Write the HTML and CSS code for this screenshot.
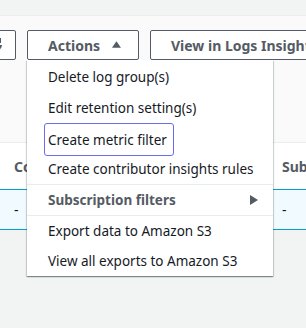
FILE: index.html
```html
<!DOCTYPE html>
<html lang="en">
<head>
<meta charset="utf-8">
<title>Log groups</title>
<link rel="stylesheet" href="styles.css">
</head>
<body>
<div class="topbar"></div>
<section class="panel">
  <div class="toolbar">
    <button class="btn btn-icon" aria-label="Refresh">
      <svg width="16" height="16" viewBox="0 0 16 16" fill="none" stroke="#545b64" stroke-width="2">
        <path d="M13 8a5 5 0 1 1-1.5-3.6"/>
        <path d="M12 1v4H8"/>
      </svg>
    </button>
    <div class="dropdown">
      <button class="btn btn-actions">Actions
        <svg class="caret" width="10" height="7" viewBox="0 0 10 7"><path d="M0 7L5 0L10 7Z" fill="#545b64"/></svg>
      </button>
      <div class="menu">
        <ul class="menu-group">
          <li class="item"><span class="label">Delete log group(s)</span></li>
          <li class="item"><span class="label">Edit retention setting(s)</span></li>
          <li class="item"><span class="label focused">Create metric filter</span></li>
          <li class="item short"><span class="label">Create contributor insights rules</span></li>
        </ul>
        <ul class="menu-group">
          <li class="item short submenu"><span class="label">Subscription filters</span>
            <svg width="8" height="10" viewBox="0 0 8 10"><path d="M0 0L8 5L0 10Z" fill="#545b64"/></svg>
          </li>
        </ul>
        <ul class="menu-group">
          <li class="item short"><span class="label">Export data to Amazon S3</span></li>
          <li class="item short"><span class="label">View all exports to Amazon S3</span></li>
        </ul>
      </div>
    </div>
    <button class="btn">View in Logs Insights</button>
  </div>
  <div class="table">
    <div class="row head">
      <div class="cell">Co</div>
      <div class="cell">Subscription filters</div>
    </div>
    <div class="row selected">
      <div class="cell">-</div>
      <div class="cell">-</div>
    </div>
  </div>
</section>
</body>
</html>
```

FILE: styles.css
```css
html, body {
  margin: 0;
  padding: 0;
  width: 306px;
  height: 328px;
  overflow: hidden;
}
body {
  background: #f2f3f3;
  font-family: "Noto Sans", "Open Sans", sans-serif;
  font-size: 14px;
  color: #16191f;
}
.topbar {
  height: 15px;
  background: #f2f3f3;
  border-bottom: 1px solid #eaeded;
}
.panel {
  background: #fafafa;
}
.toolbar {
  display: flex;
  gap: 11px;
  padding-top: 14px;
  white-space: nowrap;
  height: 30px;
}
.btn {
  box-sizing: border-box;
  height: 30px;
  display: flex;
  align-items: center;
  background: #fff;
  border: 1px solid #545b64;
  border-radius: 2px;
  color: #545b64;
  font-family: inherit;
  font-size: 14px;
  font-weight: 700;
  padding: 0 20px;
  flex: none;
  margin: 0;
}
.btn-icon {
  width: 40px;
  margin-left: -24px;
  justify-content: flex-end;
  padding: 0 11px 0 0;
}
.dropdown {
  position: relative;
}
.btn-actions {
  width: 112px;
  padding: 0 17px 0 20px;
  gap: 12px;
}
.caret {
  margin-top: -1px;
}
.menu {
  position: absolute;
  left: 0;
  top: 30px;
  width: 246px;
  background: #fff;
  z-index: 5;
  padding-top: 1px;
  box-shadow: 0 1px 1px 0 rgba(0, 28, 36, 0.3), 1px 1px 1px 0 rgba(0, 28, 36, 0.15), -1px 1px 1px 0 rgba(0, 28, 36, 0.15);
}
.menu-group {
  list-style: none;
  margin: 0;
  padding: 0;
  border-top: 1px solid #eaeded;
}
.menu-group:first-child {
  border-top: none;
}
.item {
  height: 31px;
  display: flex;
  align-items: center;
  padding-left: 18px;
  padding-right: 15px;
  white-space: nowrap;
  font-size: 13.5px;
}
.item:nth-child(3) {
  padding-top: 2px;
  height: 29px;
}
.item.short {
  height: 30px;
}
.label {
  display: inline-flex;
  align-items: center;
  height: 100%;
  box-sizing: border-box;
  padding: 0 3px;
  font-weight: 400;
}
.focused {
  outline: 1px solid #6b6bf0;
  outline-offset: 0;
  border-radius: 2px;
  height: 31px;
  padding-right: 6px;
}
.submenu {
  justify-content: space-between;
}
.submenu .label {
  font-weight: 700;
  color: #545b64;
}
.table {
  margin-top: 82px;
  background: #fff;
  border-top: 1px solid #eaeded;
}
.row {
  display: grid;
  grid-template-columns: 268px 1fr;
  white-space: nowrap;
  overflow: hidden;
}
.cell {
  padding-left: 14px;
  overflow: hidden;
}
.head {
  height: 46px;
  align-items: center;
  font-weight: 700;
  color: #545b64;
}
.selected {
  height: 39px;
  align-items: center;
  background: #f1faff;
  border-top: 1px solid #00a1c9;
  border-bottom: 1px solid #00a1c9;
  color: #16191f;
}
```
